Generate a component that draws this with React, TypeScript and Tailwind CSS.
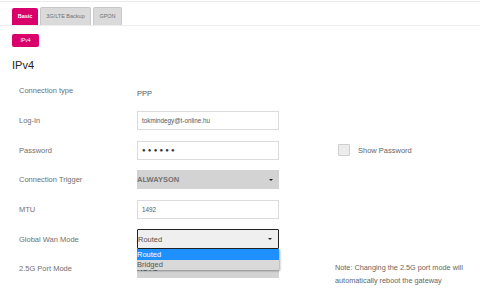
import React from 'react';

const font = { fontFamily: '"Liberation Sans", Arial, sans-serif' };

interface RowProps {
  label: string;
  children?: React.ReactNode;
  side?: React.ReactNode;
}

const Row: React.FC<RowProps> = ({ label, children, side }) => (
  <div className="flex h-[29.7px] items-center">
    <div className="w-[125px] shrink-0 pl-[7px] text-[7.5px] text-[#707070]">{label}</div>
    <div className="relative w-[142px] shrink-0">{children}</div>
    {side}
  </div>
);

const TextInput: React.FC<{ value: string; dots?: boolean }> = ({ value, dots }) => (
  <div className="flex h-[19px] items-center border border-[#dcdcdc] bg-white pl-[4px] text-[6.3px] text-[#555]">
    {dots ? <span className="tracking-[2.2px] text-[6px] text-[#333]">●●●●●●</span> : value}
  </div>
);

const Caret = () => (
  <span className="absolute right-[6px] top-1/2 -translate-y-1/2 border-x-[2px] border-t-[2.5px] border-x-transparent border-t-[#222]" />
);

export default function App() {
  return (
    <div className="h-[303px] w-[480px] overflow-hidden bg-white" style={font}>
      <div className="h-[2px] border-b border-[#ececec]" />
      <div className="px-3">
        {/* Tabs */}
        <div className="-mx-3 flex h-[24px] items-end gap-[2px] border-b border-[#ededed] px-3">
          <div className="flex h-[17px] w-[26px] items-center justify-center rounded-t-[2px] bg-[#d9006c] text-[5.5px] font-bold text-white">
            Basic
          </div>
          <div className="flex h-[18px] w-[51px] items-center justify-center rounded-t-[2px] border border-b-0 border-[#c8c8c8] bg-[#dadada] text-[5.5px] text-[#707070]">
            3G/LTE Backup
          </div>
          <div className="flex h-[18px] w-[29px] items-center justify-center rounded-t-[2px] border border-b-0 border-[#c8c8c8] bg-[#dadada] text-[5.5px] text-[#707070]">
            GPON
          </div>
        </div>

        {/* Sub tab */}
        <div className="mt-[8px] flex h-[13px] w-[27px] items-center justify-center rounded-[2px] bg-[#d9006c] text-[5px] text-white">
          IPv4
        </div>

        <div className="mt-[10px] h-[16px] text-[11px] leading-[16px] text-[#222]">IPv4</div>

        <div className="mt-[3px]">
          <Row label="Connection type">
            <span className="text-[7.5px] text-[#555]">PPP</span>
          </Row>
          <Row label="Log-In">
            <TextInput value="tokmindegy@t-online.hu" />
          </Row>
          <Row
            label="Password"
            side={
              <div className="ml-[59px] flex items-center">
                <span className="h-[12px] w-[12px] rounded-[1px] border border-[#cfcfcf] bg-[#ececec]" />
                <span className="ml-[8px] text-[7.5px] text-[#666]">Show Password</span>
              </div>
            }
          >
            <TextInput value="" dots />
          </Row>
          <Row label="Connection Trigger">
            <div className="relative flex h-[19px] items-center bg-[#d3d3d3] text-[7.5px] font-bold text-[#727272]">
              ALWAYSON
              <Caret />
            </div>
          </Row>
          <Row label="MTU">
            <TextInput value="1492" />
          </Row>
          <Row label="Global Wan Mode">
            <div className="relative flex h-[20px] items-center rounded-[1px] border border-[#222] bg-[#efefef] text-[7.5px] text-[#555]">
              Routed
              <Caret />
            </div>
            <div className="absolute left-0 right-0 top-[20px] z-10 bg-white text-[7.5px] shadow-[1px_1px_2px_rgba(0,0,0,0.35)]">
              <div className="flex h-[10.5px] items-center bg-[#1e90ff] text-white">Routed</div>
              <div className="flex h-[10.5px] items-center bg-[#d9d9d9] text-[#555]">Bridged</div>
            </div>
          </Row>
          <div className="flex h-[29.7px] items-center">
            <div className="w-[125px] shrink-0 pl-[7px] text-[7.5px] text-[#707070]">2.5G Port Mode</div>
            <div className="relative w-[142px] shrink-0">
              <div className="relative flex h-[19px] items-center bg-[#d3d3d3] text-[7.5px] font-bold text-[#6e6e6e]">
                AUTO
                <Caret />
              </div>
            </div>
            <div className="ml-[56px] self-start pt-[7px] text-[7.3px] leading-[13px] text-[#666]">
              Note: Changing the 2.5G port mode will
              <br />
              automatically reboot the gateway
            </div>
          </div>
        </div>
      </div>
    </div>
  );
}
